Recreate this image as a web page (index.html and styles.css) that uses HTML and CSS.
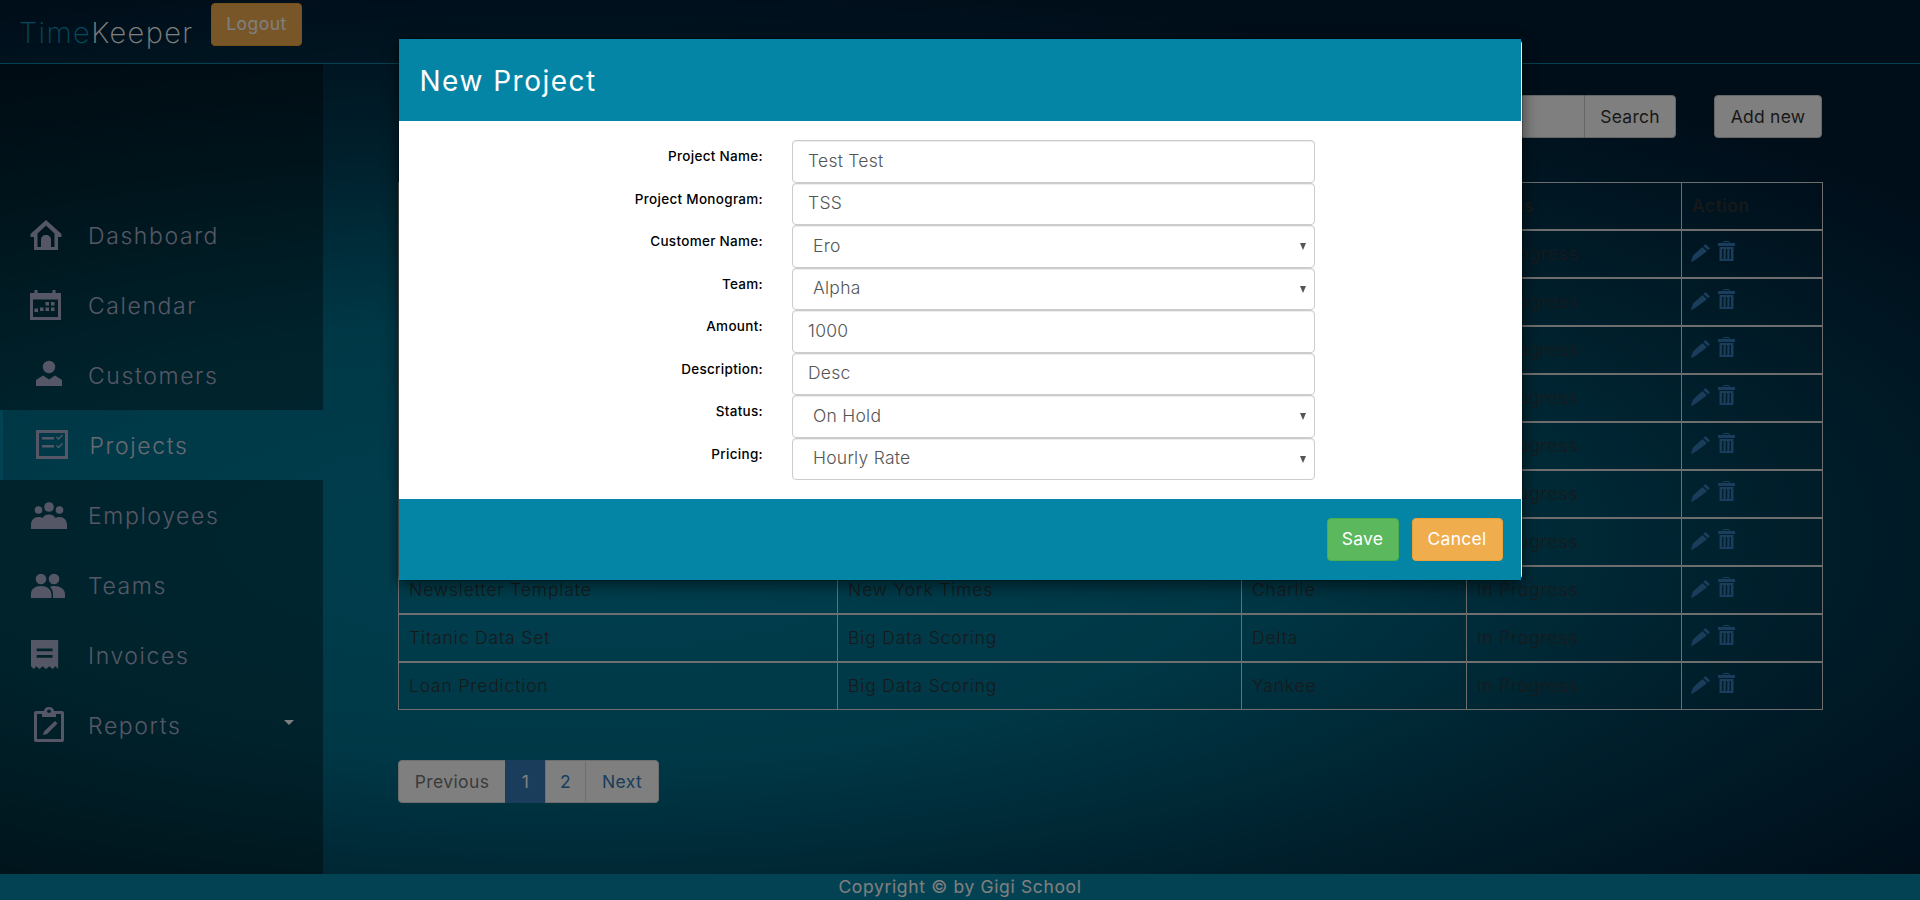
FILE: index.html
```html
<!DOCTYPE html>
<html lang="en">
<head>
  <meta charset="UTF-8">
  <title>TimeKeeper</title>
  <link rel="stylesheet" href="styles.css">
</head>
<body>

<svg class="defs" width="0" height="0">
  <symbol id="ic-edit" viewBox="0 0 19 18">
    <path d="M14.4 0 19 4.2 17 6.2 12.4 2ZM11.4 3 16 7.2 5.6 15 .6 18 0 17.4 2 11.6Z"/>
  </symbol>
  <symbol id="ic-trash" viewBox="0 0 17 20">
    <path fill-rule="evenodd" d="M6 0H11L12 2H17V5H0V2H5ZM6.5 1 6 2H11L10.5 1ZM1.5 6H15.5V20H1.5ZM4 8V18H5.5V8ZM7.7 8V18H9.3V8ZM11.5 8V18H13V8Z"/>
  </symbol>
</svg>

<header class="topbar">
  <div class="logo"><span class="logo-time">Time</span>Keeper</div>
  <button class="btn-logout">Logout</button>
</header>

<div class="main">
  <nav class="sidebar">
    <div class="side-pad"></div>
    <a class="nav-item">
      <svg class="nav-icon" viewBox="0 0 38 30"><path fill-rule="evenodd" d="M19 0 34.500 14V17H31V30H7V17H3.500V14ZM19 5.500 10.500 13.500V27H14V20C14 17 16 15 19 15S24 17 24 20V27H27.500V13.500Z"/></svg>
      <span>Dashboard</span>
    </a>
    <a class="nav-item">
      <svg class="nav-icon" viewBox="0 0 38 30"><path fill-rule="evenodd" d="M7.500 0H10.500V3H25.500V0H28.500V3H34V30H3V3H7.500ZM6 9.500V27H31V9.500ZM18.500 12H22V15.500H18.500ZM24 12H27.500V15.500H24ZM13 17.500H16.500V21H13ZM18.500 17.500H22V21H18.500ZM24 17.500H27.500V21H24ZM7.500 18.500H11V22H7.500Z"/></svg>
      <span>Calendar</span>
    </a>
    <a class="nav-item">
      <svg class="nav-icon nav-icon-shift" viewBox="0 0 38 30"><circle cx="19" cy="7" r="6.200"/><path d="M13 15.500 19 19.500 25 15.500 32 20V26H6V20Z"/></svg>
      <span>Customers</span>
    </a>
    <a class="nav-item active">
      <svg class="nav-icon" viewBox="0 0 38 30"><path fill-rule="evenodd" d="M4 0H36V29H4ZM7 3V26H33V3ZM10 7H22V9.500H10ZM10 15H22V17.500H10ZM24 7.500 25 6.500 26.500 8 30 4.500 31 5.500 26.500 10ZM24 16 25 15 26.500 16.500 30 13 31 14 26.500 18.500Z"/></svg>
      <span>Projects</span>
    </a>
    <a class="nav-item">
      <svg class="nav-icon nav-icon-shift" viewBox="0 0 38 30"><circle cx="19" cy="7" r="4.800"/><circle cx="8.500" cy="10" r="3.800"/><circle cx="29.500" cy="10" r="3.800"/><path d="M1 29V25C1 20 4 17 8.500 17 10 17 11.500 17.400 12.500 18 14 15.500 16 14.500 19 14.500S24 15.500 25.500 18C26.500 17.400 28 17 29.500 17 34 17 37 20 37 25V29Z"/></svg>
      <span>Employees</span>
    </a>
    <a class="nav-item">
      <svg class="nav-icon nav-icon-shift" viewBox="0 0 38 30"><circle cx="11" cy="9" r="5.300"/><circle cx="24" cy="9" r="5.300"/><path d="M1 28V24C1 19 5 16 11 16S21 19 21.500 24V28ZM23 28V24C23 21 22 19 20 17 21 16.400 22.500 16 24 16 30 16 35 19 35 24V28Z"/></svg>
      <span>Teams</span>
    </a>
    <a class="nav-item">
      <svg class="nav-icon" viewBox="0 0 38 32"><path fill-rule="evenodd" d="M3 0H32V31L29 28 26 31 22.500 28 19 31 15.500 28 12 31 8.500 28 6 31 3 28ZM9 9V12H26V9ZM9 16V19H26V16Z"/></svg>
      <span>Invoices</span>
    </a>
    <a class="nav-item">
      <svg class="nav-icon nav-icon-tall nav-icon-shift" viewBox="0 0 38 36"><path fill-rule="evenodd" d="M14 4C14 2 16 0 19 0S24 2 24 4H32C33.500 4 34 5 34 6V33C34 34.500 33 35 32 35H6C5 35 4 34.500 4 33V6C4 5 4.500 4 6 4ZM7 7V32H31V7H26V10H12V7ZM19 2.500C18 2.500 17 3.300 17 4.300S18 6 19 6 21 5.300 21 4.300 20 2.500 19 2.500ZM25 14 27.500 16.500 17 27 13 28 14 24.500Z"/></svg>
      <span>Reports</span>
      <i class="caret"></i>
    </a>
    <div class="side-pad side-fill"></div>
  </nav>

  <section class="content">
    <div class="toolbar">
      <div class="search-group">
        <input class="search-input" type="text">
        <button class="btn-default btn-search">Search</button>
      </div>
      <button class="btn-default btn-add">Add new</button>
    </div>

    <table class="projects">
      <colgroup>
        <col class="col-project"><col class="col-customer"><col class="col-team"><col class="col-status"><col class="col-action">
      </colgroup>
      <thead>
        <tr><th>Project</th><th>Customer</th><th>Team</th><th>Status</th><th>Action</th></tr>
      </thead>
      <tbody>
        <tr><td></td><td></td><td></td><td>In Progress</td><td><svg class="ic ic-pen"><use href="#ic-edit"/></svg><svg class="ic ic-bin"><use href="#ic-trash"/></svg></td></tr>
        <tr><td></td><td></td><td></td><td>In Progress</td><td><svg class="ic ic-pen"><use href="#ic-edit"/></svg><svg class="ic ic-bin"><use href="#ic-trash"/></svg></td></tr>
        <tr><td></td><td></td><td></td><td>In Progress</td><td><svg class="ic ic-pen"><use href="#ic-edit"/></svg><svg class="ic ic-bin"><use href="#ic-trash"/></svg></td></tr>
        <tr><td></td><td></td><td></td><td>In Progress</td><td><svg class="ic ic-pen"><use href="#ic-edit"/></svg><svg class="ic ic-bin"><use href="#ic-trash"/></svg></td></tr>
        <tr><td></td><td></td><td></td><td>In Progress</td><td><svg class="ic ic-pen"><use href="#ic-edit"/></svg><svg class="ic ic-bin"><use href="#ic-trash"/></svg></td></tr>
        <tr><td></td><td></td><td></td><td>In Progress</td><td><svg class="ic ic-pen"><use href="#ic-edit"/></svg><svg class="ic ic-bin"><use href="#ic-trash"/></svg></td></tr>
        <tr><td></td><td></td><td></td><td>In Progress</td><td><svg class="ic ic-pen"><use href="#ic-edit"/></svg><svg class="ic ic-bin"><use href="#ic-trash"/></svg></td></tr>
        <tr><td>Newsletter Template</td><td>New York Times</td><td>Charlie</td><td>In Progress</td><td><svg class="ic ic-pen"><use href="#ic-edit"/></svg><svg class="ic ic-bin"><use href="#ic-trash"/></svg></td></tr>
        <tr><td>Titanic Data Set</td><td>Big Data Scoring</td><td>Delta</td><td>In Progress</td><td><svg class="ic ic-pen"><use href="#ic-edit"/></svg><svg class="ic ic-bin"><use href="#ic-trash"/></svg></td></tr>
        <tr><td>Loan Prediction</td><td>Big Data Scoring</td><td>Yankee</td><td>In Progress</td><td><svg class="ic ic-pen"><use href="#ic-edit"/></svg><svg class="ic ic-bin"><use href="#ic-trash"/></svg></td></tr>
      </tbody>
    </table>

    <ul class="pagination">
      <li class="page-prev">Previous</li>
      <li class="page-num current">1</li>
      <li class="page-num">2</li>
      <li class="page-next">Next</li>
    </ul>
  </section>
</div>

<footer class="copyright">Copyright © by Gigi School</footer>

<div class="backdrop"></div>

<div class="modal-wrap">
  <div class="modal">
    <div class="modal-head">New Project</div>
    <form class="modal-body">
      <div class="form-row"><label>Project Name:</label><input type="text" value="Test Test"></div>
      <div class="form-row"><label>Project Monogram:</label><input type="text" value="TSS"></div>
      <div class="form-row"><label>Customer Name:</label><div class="select-wrap"><select><option>Ero</option></select></div></div>
      <div class="form-row"><label>Team:</label><div class="select-wrap"><select><option>Alpha</option></select></div></div>
      <div class="form-row"><label>Amount:</label><input type="text" value="1000"></div>
      <div class="form-row"><label>Description:</label><input type="text" value="Desc"></div>
      <div class="form-row"><label>Status:</label><div class="select-wrap"><select><option>On Hold</option></select></div></div>
      <div class="form-row"><label>Pricing:</label><div class="select-wrap"><select><option>Hourly Rate</option></select></div></div>
    </form>
    <div class="modal-foot">
      <button class="btn-save">Save</button>
      <button class="btn-cancel">Cancel</button>
    </div>
  </div>
</div>

</body>
</html>
```

FILE: styles.css
```css
* {
  box-sizing: border-box;
}
html, body {
  height: 100%;
}
body {
  margin: 0;
  height: 900px;
  overflow: hidden;
  display: flex;
  flex-direction: column;
  position: relative;
  font-family: Inter, "Open Sans", sans-serif;
  font-size: 17.5px;
  letter-spacing: .65px;
  color: #333;
  background: radial-gradient(ellipse 1700px 560px at 30% 60%, #00809f 0%, #006f8c 40%, #003f58 70%, #001c33 100%), #001a30;
}
button, input, select {
  font-family: inherit;
  font-size: inherit;
}
.defs {
  position: absolute;
}

/* top bar */
.topbar {
  height: 64px;
  flex: none;
  display: flex;
  align-items: flex-start;
  border-bottom: 1px solid #0585a6;
  padding: 3px 0 0 19px;
}
.logo {
  font-size: 29px;
  font-weight: 200;
  letter-spacing: 1.4px;
  line-height: 60px;
  color: #fff;
  width: 192px;
}
.logo-time {
  color: #0a93b8;
}
.btn-logout {
  width: 91px;
  height: 43px;
  padding: 0 0 2px;
  background: #f0ad4e;
  border: 1px solid #eea236;
  border-radius: 4px;
  color: #fff;
  font-weight: 400;
  letter-spacing: .5px;
}

.main {
  flex: 1;
  display: flex;
  min-height: 0;
}

/* sidebar */
.sidebar {
  width: 323px;
  flex: none;
  display: flex;
  flex-direction: column;
}
.side-pad {
  height: 136px;
  background: rgba(0, 0, 0, .38);
}
.side-fill {
  flex: 1;
}
.nav-item {
  height: 70px;
  flex: none;
  display: flex;
  align-items: center;
  padding-left: 27px;
  gap: 23px;
  position: relative;
  background: rgba(0, 0, 0, .38);
  color: #adafcc;
  font-size: 23px;
  font-weight: 300;
  letter-spacing: 1.6px;
}
.nav-item span {
  padding-top: 1.5px;
}
.nav-item.active {
  background: none;
  border-left: 3px solid #0585a6;
  padding-left: 29px;
  gap: 19.5px;
  color: #cfd4e0;
}
.nav-icon {
  width: 38px;
  height: 30px;
  fill: #adafcc;
  overflow: visible;
}
.nav-icon-tall {
  height: 36px;
}
/* these glyphs sit a little right of the others in the icon column */
.nav-icon-shift {
  transform: translateX(3px);
}
.caret {
  position: absolute;
  left: 284px;
  top: 30px;
  border-top: 5px solid #fff;
  border-left: 5px solid transparent;
  border-right: 5px solid transparent;
}

/* content */
.content {
  flex: 1;
  padding: 31px 97px 0 75px;
}
.toolbar {
  display: flex;
  justify-content: flex-end;
  gap: 38px;
  padding-right: 1px;
}
.search-group {
  display: flex;
  height: 43px;
}
.search-input {
  width: 300px;
  border: 1px solid #ccc;
  border-right: none;
  border-radius: 4px 0 0 4px;
  background: #fff;
}
.btn-default {
  height: 43px;
  background: #fff;
  border: 1px solid #ccc;
  color: #333;
  border-radius: 4px;
  letter-spacing: .25px;
}
.btn-search {
  width: 92px;
  padding: 0;
  border-radius: 0 4px 4px 0;
}
.btn-add {
  width: 108px;
  padding: 0;
}

.projects {
  width: 1425px;
  margin-top: 44px;
  table-layout: fixed;
  border-collapse: separate;
  border-spacing: 0;
  letter-spacing: .85px;
}
.col-project { width: 439px; }
.col-customer { width: 404px; }
.col-team { width: 225px; }
.col-status { width: 215px; }
.col-action { width: 142px; }
.projects th, .projects td {
  height: 48px;
  padding: 0 10px 2px;
  border-top: 1px solid #ddd;
  border-bottom: 1px solid #ddd;
  border-left: 1px solid #ddd;
  text-align: left;
  font-weight: 300;
  white-space: nowrap;
}
.projects th {
  font-weight: 500;
  letter-spacing: .65px;
}
.projects th:last-child, .projects td:last-child {
  border-right: 1px solid #ddd;
}
.ic {
  fill: #337ab7;
  vertical-align: middle;
}
.ic-pen {
  width: 19px;
  height: 18px;
  margin: -4px 8px 0 -1px;
}
.ic-bin {
  width: 17px;
  height: 20px;
  margin-top: -8px;
}

.pagination {
  list-style: none;
  display: flex;
  margin: 50px 0 0;
  padding: 0;
  height: 43px;
  width: 261px;
  color: #337ab7;
  letter-spacing: .4px;
}
.pagination li {
  display: flex;
  align-items: center;
  justify-content: center;
  background: #fff;
  border: 1px solid #ddd;
  margin-left: -1px;
}
.page-prev {
  width: 108px;
  margin-left: 0 !important;
  color: #777;
  border-radius: 4px 0 0 4px;
}
.page-num {
  width: 41px;
}
.page-num.current {
  background: #337ab7;
  border-color: #337ab7;
  color: #fff;
}
.page-next {
  width: 74px;
  border-radius: 0 4px 4px 0;
}

.copyright {
  height: 26px;
  flex: none;
  background: #0585a6;
  color: #fff;
  text-align: center;
  line-height: 26px;
}

/* modal */
.backdrop {
  position: absolute;
  inset: 0;
  background: rgba(0, 0, 0, .5);
}
.modal-wrap {
  position: absolute;
  inset: 0;
  padding-top: 38px;
  display: flex;
  justify-content: center;
  align-items: flex-start;
}
.modal {
  width: 1125px;
  background: #fff;
  background-clip: padding-box;
  border: 1px solid rgba(0, 0, 0, .2);
  border-radius: 6px;
  box-shadow: 0 5px 15px rgba(0, 0, 0, .5);
}
.modal-head {
  height: 82px;
  margin-right: 1px;
  padding: 2px 0 0 21px;
  background: #0585a6;
  color: #fff;
  font-size: 28px;
  font-weight: 400;
  letter-spacing: 1.5px;
  line-height: 80px;
}
.modal-body {
  height: 378px;
  margin: 0;
  padding-top: 19px;
}
.form-row {
  display: flex;
  height: 42.5px;
}
.form-row label {
  width: 364.5px;
  margin-right: 29px;
  padding-top: 8px;
  text-align: right;
  font-size: 13.5px;
  font-weight: 450;
  letter-spacing: .3px;
  color: #000;
}
.form-row input, .form-row select {
  width: 523px;
  height: 42.5px;
  padding: 0 15px 2px;
  background: #fff;
  border: 1px solid #ccc;
  border-radius: 4px;
  box-shadow: inset 0 1px 1px rgba(0, 0, 0, .075);
  color: #555;
  font-weight: 300;
  letter-spacing: .25px;
}
.form-row select {
  appearance: none;
  padding-left: 20px;
}
.select-wrap {
  position: relative;
}
.select-wrap::after {
  content: "";
  position: absolute;
  right: 9px;
  top: 18px;
  border-top: 7px solid #555;
  border-left: 3.5px solid transparent;
  border-right: 3.5px solid transparent;
}
.modal-foot {
  height: 81px;
  margin-right: 1px;
  padding: 19px 18px 0 0;
  display: flex;
  justify-content: flex-end;
  gap: 13px;
  background: #0585a6;
}
.modal-foot button {
  height: 43px;
  padding: 0 0 2px;
  border-radius: 4px;
  color: #fff;
  font-weight: 400;
  letter-spacing: .25px;
}
.btn-save {
  width: 72px;
  background: #5cb85c;
  border: 1px solid #4cae4c;
}
.btn-cancel {
  width: 91px;
  background: #f0ad4e;
  border: 1px solid #eea236;
}
```
